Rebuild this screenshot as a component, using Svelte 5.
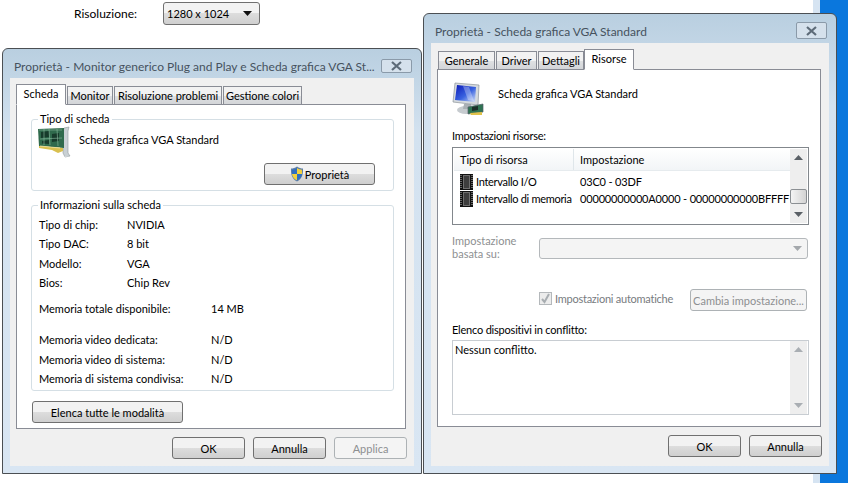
<script>
	const infoTop = [
		["Tipo di chip:", "NVIDIA"],
		["Tipo DAC:", "8 bit"],
		["Modello:", "VGA"],
		["Bios:", "Chip Rev"]
	];
	const infoMem = [
		{ label: "Memoria video dedicata:", value: "N/D" },
		{ label: "Memoria video di sistema:", value: "N/D" },
		{ label: "Memoria di sistema condivisa:", value: "N/D" }
	];
	const resources = [
		["Intervallo I/O", "03C0 - 03DF"],
		["Intervallo di memoria", "00000000000A0000 - 00000000000BFFFF"]
	];
</script>

{#snippet card()}
	<svg class="card-icon" width="34" height="32" viewBox="0 0 34 32">
		<path d="M27 2l5-1-1 4v22l2 3-5 1-2-4V5z" fill="#c9d0d4" stroke="#8f989c" stroke-width=".6" />
		<path d="M1 3l26-1v20L2 20z" fill="#2f6a4c" />
		<path d="M4 6l8-1v6l-8 1zM15 8l7-1v8l-7 1zM5 15l7-1v4l-7-.5z" fill="#173b2b" />
		<path d="M2 4l23 0M3 13l22-1M12 3l1 16M20 3l1 17M7 3v16" stroke="#8abb9f" stroke-width=".6" fill="none" />
		<path d="M2 20l24 2v3l-5 2-6-3-13-2z" fill="#d9c04f" />
		<path d="M3 20l20 2" stroke="#f0e3a0" stroke-width=".8" />
		<path d="M28 30l5 1h-6z" fill="#d5dadd" />
	</svg>
{/snippet}

{#snippet monitor()}
	<svg class="mon-icon" width="34" height="34" viewBox="0 0 34 34">
		<defs>
			<linearGradient id="scr" x1="0" y1="0" x2="1" y2="1">
				<stop offset="0" stop-color="#0a18b8" />
				<stop offset=".55" stop-color="#3a63e0" />
				<stop offset="1" stop-color="#d4e2f8" />
			</linearGradient>
		</defs>
		<ellipse cx="14" cy="28" rx="9" ry="4" fill="#c6cbcf" />
		<path d="M12 22h7l1 5h-9z" fill="#aab0b5" />
		<path d="M3 1l24 2-1 20-25-3z" fill="#d5dade" stroke="#8c949a" stroke-width=".7" />
		<path d="M5 3l19 2-1 15-20-2z" fill="url(#scr)" />
		<path d="M11 4l6 1 5 14-6-1z" fill="#fff" opacity=".3" />
		<path d="M16 25l15-3v8l-15 2z" fill="#2f7352" stroke="#54606a" stroke-width=".7" />
		<path d="M20 25l6-1v4l-6 1z" fill="#1d2f2a" />
		<path d="M18 31l12-1v3H19z" fill="#e0c24a" />
	</svg>
{/snippet}

{#snippet chip()}
	<svg class="chip" width="13" height="16" viewBox="0 0 13 16">
		<rect x="0" y="0" width="13" height="16" fill="#111" />
		<path d="M1 1v14M12 1v14" stroke="#bbb" stroke-width="1" stroke-dasharray="1 1" />
		<rect x="3" y="1" width="7" height="14" fill="#6e6e6e" />
		<rect x="4" y="2" width="5" height="12" fill="#3e3e3e" />
	</svg>
{/snippet}

{#snippet shield()}
	<svg class="shield" width="14" height="16" viewBox="0 0 14 16">
		<path d="M7 .5c2 1.400 4 2 6 2 .3 6-1 10.500-6 13-5-2.500-6.300-7-6-13 2 0 4-.6 6-2z" fill="#5c7ea8" />
		<path d="M7 2v6H2c0-1.500 0-3 .1-4.300C4 3.500 5.500 3 7 2zM7 8h5c-.4 2.800-2 5-5 6.300z" fill="#2f6fc0" />
		<path d="M7 2c1.500 1 3 1.500 4.900 1.700.1 1.400.1 2.900.1 4.300H7zM7 8v6.300C4 13 2.400 10.800 2 8z" fill="#f3d23c" />
	</svg>
{/snippet}

{#snippet arrowUp(dim)}
	<span class="sb-btn"><svg width="9" height="5" viewBox="0 0 9 5"><path d="M4.500 0l4.500 5H0z" fill={dim ? "#a9aeb3" : "#5a6066"} /></svg></span>
{/snippet}

{#snippet arrowDown(dim)}
	<span class="sb-btn"><svg width="9" height="5" viewBox="0 0 9 5"><path d="M0 0h9L4.500 5z" fill={dim ? "#a9aeb3" : "#5a6066"} /></svg></span>
{/snippet}

<div class="page">
	<div class="desktop"></div>

	<div class="res-row">
		<span class="res-label">Risoluzione:</span>
		<div class="res-select">
			<span>1280 x 1024</span>
			<svg width="9" height="5" viewBox="0 0 9 5"><path d="M0 0h9L4.500 5z" fill="#111" /></svg>
		</div>
	</div>

	<section class="window left-win">
		<header class="titlebar">
			<span class="title">Proprietà - Monitor generico Plug and Play e Scheda grafica VGA St...</span>
			<span class="close"><svg width="13" height="10" viewBox="0 0 13 10"><path d="M2 1l9 8M11 1L2 9" stroke="#5d6b78" stroke-width="2.200" /></svg></span>
		</header>
		<div class="client">
			<nav class="tabs">
				<span class="tab active w-scheda">Scheda</span>
				<span class="tab w-monitor">Monitor</span>
				<span class="tab w-ris">Risoluzione problemi</span>
				<span class="tab w-col">Gestione colori</span>
			</nav>
			<div class="tab-body left-body">
				<fieldset class="group group-a">
					<legend>Tipo di scheda</legend>
					<div class="adapter">
						{@render card()}
						<span>Scheda grafica VGA Standard</span>
					</div>
					<div class="prop-row">
						<button class="btn prop">{@render shield()}Proprietà</button>
					</div>
				</fieldset>
				<fieldset class="group group-b">
					<legend>Informazioni sulla scheda</legend>
					<div class="info-top">
						{#each infoTop as [k, v]}
							<div class="info-row"><span class="k1">{k}</span><span>{v}</span></div>
						{/each}
					</div>
					<div class="info-row total"><span class="k2">Memoria totale disponibile:</span><span>14 MB</span></div>
					<div class="info-mem">
						{#each infoMem as m}
							<div class="info-row"><span class="k2">{m.label}</span><span>{m.value}</span></div>
						{/each}
					</div>
				</fieldset>
				<button class="btn list-all">Elenca tutte le modalità</button>
			</div>
			<footer class="actions">
				<button class="btn act">OK</button>
				<button class="btn act">Annulla</button>
				<button class="btn act off">Applica</button>
			</footer>
		</div>
	</section>

	<section class="window right-win">
		<header class="titlebar">
			<span class="title">Proprietà - Scheda grafica VGA Standard</span>
			<span class="close tall"><svg width="13" height="10" viewBox="0 0 13 10"><path d="M2 1l9 8M11 1L2 9" stroke="#5d6b78" stroke-width="2.200" /></svg></span>
		</header>
		<div class="client">
			<nav class="tabs">
				<span class="tab w-gen">Generale</span>
				<span class="tab w-drv">Driver</span>
				<span class="tab w-det">Dettagli</span>
				<span class="tab active w-res">Risorse</span>
			</nav>
			<div class="tab-body right-body">
				<div class="device">
					{@render monitor()}
					<span>Scheda grafica VGA Standard</span>
				</div>
				<div class="caption c-res">Impostazioni risorse:</div>
				<div class="listbox">
					<div class="list-main">
						<div class="list-head">
							<span class="col1">Tipo di risorsa</span>
							<span class="col2">Impostazione</span>
						</div>
						{#each resources as [name, val]}
							<div class="list-row">
								{@render chip()}
								<span class="name">{name}</span>
								<span class="val">{val}</span>
							</div>
						{/each}
					</div>
					<div class="scrollbar">
						{@render arrowUp(false)}
						<span class="thumb"></span>
						{@render arrowDown(false)}
					</div>
				</div>
				<div class="based">
					<span class="based-label">Impostazione<br />basata su:</span>
					<div class="dis-select"><svg width="9" height="5" viewBox="0 0 9 5"><path d="M0 0h9L4.500 5z" fill="#a4a8ac" /></svg></div>
				</div>
				<div class="auto">
					<span class="check"><svg width="11" height="11" viewBox="0 0 11 11"><path d="M2 6l2.500 3L9 1" stroke="#a8adb1" stroke-width="2" fill="none" /></svg></span>
					<span class="auto-label">Impostazioni automatiche</span>
					<button class="btn change off">Cambia impostazione...</button>
				</div>
				<div class="caption c-conf">Elenco dispositivi in conflitto:</div>
				<div class="textbox">
					<div class="text-main">Nessun conflitto.</div>
					<div class="scrollbar faint">
						{@render arrowUp(true)}
						<span class="spacer"></span>
						{@render arrowDown(true)}
					</div>
				</div>
			</div>
			<footer class="actions">
				<button class="btn act">OK</button>
				<button class="btn act">Annulla</button>
			</footer>
		</div>
	</section>
</div>

<style>
	:global(body) {
		margin: 0;
		background: #fff;
		overflow: hidden;
	}

	.page {
		position: relative;
		width: 848px;
		height: 483px;
		overflow: hidden;
		font-family: Lato, "Noto Sans", sans-serif;
		font-size: 11px;
		color: #000;
	}

	.desktop {
		position: absolute;
		left: 813px;
		top: 0;
		bottom: 0;
		width: 35px;
		background: linear-gradient(90deg, #d6e4f2 0 7px, #0a77dd 7px);
	}

	.res-row {
		position: absolute;
		left: 74px;
		top: 2px;
		display: flex;
		align-items: center;
	}

	.res-label {
		width: 89px;
		font-size: 12px;
	}

	.res-select {
		box-sizing: border-box;
		width: 97px;
		height: 23px;
		display: flex;
		align-items: center;
		justify-content: space-between;
		padding: 0 3px;
		border: 1px solid #707070;
		border-radius: 3px;
		background: linear-gradient(#f3f3f3 0 50%, #dddddd 50%, #cfcfcf);
	}

	.res-select svg {
		margin-right: 4px;
	}

	.window {
		position: absolute;
		box-sizing: border-box;
		display: flex;
		flex-direction: column;
		border: 1px solid #4b4f53;
		border-radius: 6px 6px 0 0;
		padding: 0 7px 7px;
		background: linear-gradient(#b9cfe0, #d3e2f0 20%, #d9e6f3);
	}

	.left-win {
		left: 2px;
		top: 48px;
		width: 420px;
		height: 426px;
	}

	.right-win {
		left: 423px;
		top: 13px;
		width: 414px;
		height: 461px;
	}

	.titlebar {
		height: 29px;
		flex: none;
		display: flex;
		align-items: center;
		justify-content: space-between;
		padding-left: 4px;
	}

	.title {
		font-size: 12px;
		color: #46525e;
		white-space: nowrap;
		padding-top: 6px;
	}

	.close {
		box-sizing: border-box;
		width: 31px;
		height: 14px;
		margin-top: 5px;
		margin-right: 2px;
		flex: none;
		display: flex;
		align-items: center;
		justify-content: center;
		border: 1px solid #8a9aa9;
		border-radius: 2px;
		background: #d5e1ec;
	}

	.close.tall {
		height: 17px;
		margin-top: 4px;
	}

	.client {
		flex: 1;
		display: flex;
		flex-direction: column;
		background: #f0f0f0;
		padding: 0 8px 0 6px;
		min-height: 0;
	}

	.tabs {
		height: 27px;
		flex: none;
		display: flex;
		align-items: flex-end;
		gap: 1px;
		margin-bottom: -1px;
		position: relative;
		z-index: 1;
	}

	.tab {
		box-sizing: border-box;
		height: 19px;
		display: flex;
		align-items: center;
		justify-content: center;
		border: 1px solid #898c95;
		background: linear-gradient(#f2f2f2 0 50%, #dfe1e3 50%, #d3d5d8);
		white-space: nowrap;
	}

	.tab.active {
		height: 21px;
		background: #fff;
		border-bottom-color: #fff;
		padding-bottom: 3px;
	}

	.w-scheda { width: 50px; }
	.w-monitor { width: 46px; }
	.w-ris { width: 108px; }
	.w-col { width: 79px; }
	.w-gen { width: 57px; margin-left: 1px; }
	.w-drv { width: 41px; }
	.w-det { width: 46px; }
	.w-res { width: 50px; margin-left: -1px; }

	.tab-body {
		box-sizing: border-box;
		border: 1px solid #898c95;
		background: #fff;
		flex: none;
		display: flex;
		flex-direction: column;
	}

	.left-body {
		height: 325px;
		padding: 12px 12px 0 14px;
	}

	.right-body {
		height: 358px;
		padding: 0 12px 0 14px;
	}

	.group {
		box-sizing: border-box;
		margin: 0;
		padding: 0 8px;
		border: 1px solid #d5dfe5;
		border-radius: 3px;
		min-width: 0;
		width: 363px;
	}

	.group legend {
		padding: 0 2px;
		line-height: 12px;
	}

	.group-a {
		height: 78px;
		margin-top: -4px;
		padding: 0 5px;
	}

	.group-a legend {
		margin-left: 1px;
	}

	.adapter {
		display: flex;
		align-items: flex-start;
		height: 37px;
		margin-top: 1px;
	}

	.card-icon {
		flex: none;
		margin-right: 8px;
	}

	.adapter span {
		margin-top: 7px;
		line-height: 14px;
	}

	.prop-row {
		display: flex;
		justify-content: flex-end;
		padding-right: 13px;
	}

	.btn {
		box-sizing: border-box;
		height: 22px;
		padding: 0;
		font: inherit;
		color: #000;
		display: flex;
		align-items: center;
		justify-content: center;
		border: 1px solid #707070;
		border-radius: 3px;
		background: linear-gradient(#f2f2f2 0 50%, #dddddd 50%, #cfcfcf);
		white-space: nowrap;
	}

	.btn.off {
		color: #8d8f91;
		border-color: #adb2b5;
		background: #f4f4f4;
	}

	.prop {
		width: 111px;
	}

	.shield {
		margin-right: 1px;
	}

	.group-b {
		height: 192px;
		margin-top: 8px;
		padding: 0 7px;
	}

	.group-b legend {
		margin-left: -1px;
	}

	.info-top {
		display: flex;
		flex-direction: column;
		gap: 5.400px;
		margin-top: 7px;
	}

	.info-row {
		display: flex;
		line-height: 14px;
		white-space: nowrap;
	}

	.k1 { width: 88px; }
	.k2 { width: 172px; }

	.total {
		margin-top: 12px;
	}

	.info-mem {
		display: flex;
		flex-direction: column;
		gap: 5.500px;
		margin-top: 17px;
	}

	.list-all {
		width: 151px;
		margin: 10px 0 0 1px;
	}

	.actions {
		flex: 1;
		display: flex;
		justify-content: flex-end;
		gap: 8px;
		padding-top: 8px;
		margin-right: -1px;
	}

	.act {
		width: 73px;
	}

	.device {
		display: flex;
		align-items: flex-start;
		height: 42px;
		margin-top: 12px;
	}

	.mon-icon {
		flex: none;
		margin-right: 12px;
	}

	.device span {
		margin-top: 5px;
		line-height: 14px;
	}

	.caption {
		line-height: 14px;
		white-space: nowrap;
	}

	.c-res {
		margin-top: 5px;
		letter-spacing: -.25px;
	}

	.listbox {
		box-sizing: border-box;
		width: 357px;
		height: 78px;
		margin-top: 4px;
		display: flex;
		border: 1px solid #82878c;
		background: #fff;
		padding: 1px;
	}

	.list-main {
		flex: 1;
		min-width: 0;
	}

	.list-head {
		height: 21px;
		display: flex;
		align-items: center;
		background: linear-gradient(#fff, #f2f5f7);
		border-bottom: 1px solid #e6ebee;
	}

	.col1 {
		box-sizing: border-box;
		width: 120px;
		padding-left: 6px;
		height: 100%;
		display: flex;
		align-items: center;
		border-right: 1px solid #dfe6ea;
	}

	.col2 {
		padding-left: 6px;
	}

	.list-row {
		height: 17px;
		display: flex;
		align-items: center;
		padding-left: 6px;
		white-space: nowrap;
	}

	.list-row:nth-child(2) {
		margin-top: 2px;
	}

	.chip {
		flex: none;
		margin-right: 2px;
	}

	.name {
		width: 104px;
		flex: none;
		margin-left: 1px;
		letter-spacing: -.3px;
	}

	.val {
		letter-spacing: -.17px;
	}

	.scrollbar {
		width: 17px;
		flex: none;
		display: flex;
		flex-direction: column;
		background: #eeeeee;
	}

	.sb-btn {
		height: 17px;
		flex: none;
		display: flex;
		align-items: center;
		justify-content: center;
	}

	.thumb {
		box-sizing: border-box;
		height: 15px;
		margin-top: auto;
		border: 1px solid #8b8f93;
		border-radius: 2px;
		background: linear-gradient(90deg, #f4f4f4, #d3d3d3);
	}

	.scrollbar .thumb + .sb-btn {
		margin-top: 2px;
	}

	.spacer {
		flex: 1;
	}

	.based {
		display: flex;
		align-items: flex-start;
		margin-top: 13px;
		color: #8d8f91;
	}

	.based-label {
		width: 87px;
		flex: none;
		line-height: 13px;
		margin-top: -4px;
	}

	.dis-select {
		box-sizing: border-box;
		width: 270px;
		height: 21px;
		display: flex;
		align-items: center;
		justify-content: flex-end;
		padding-right: 5px;
		border: 1px solid #b4b8bb;
		border-radius: 3px;
		background: #f4f4f4;
	}

	.auto {
		display: flex;
		align-items: center;
		margin: 29px 0 0 87px;
		height: 22px;
		color: #777b80;
	}

	.check {
		box-sizing: border-box;
		width: 13px;
		height: 13px;
		display: flex;
		align-items: center;
		justify-content: center;
		border: 1px solid #b4b8bb;
		background: #ececec;
		margin-right: 3px;
		margin-top: -3px;
	}

	.auto-label {
		margin-top: -3px;
		white-space: nowrap;
		letter-spacing: -.25px;
	}

	.change {
		width: 117px;
		margin-left: auto;
		margin-right: 1px;
	}

	.c-conf {
		margin-top: 12px;
		letter-spacing: -.2px;
	}

	.textbox {
		box-sizing: border-box;
		width: 357px;
		height: 75px;
		margin-top: 3px;
		display: flex;
		border: 1px solid #c8cdd2;
		background: #fff;
		padding: 0 1px 0 0;
	}

	.text-main {
		flex: 1;
		padding: 2px;
		line-height: 14px;
	}
</style>
